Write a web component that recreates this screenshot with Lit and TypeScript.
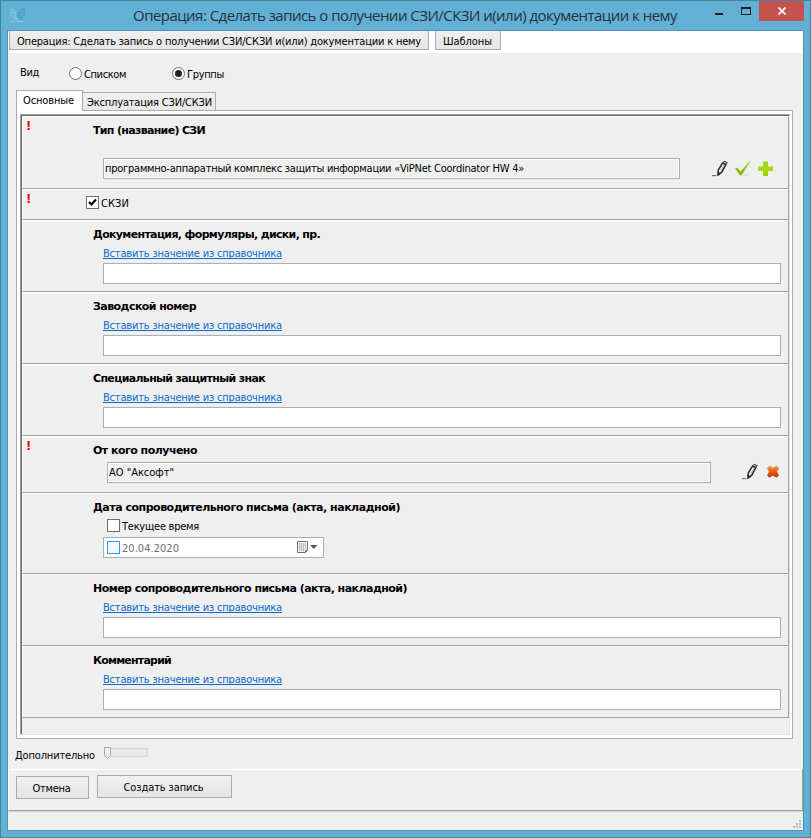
import { LitElement, html, css, svg, nothing, TemplateResult } from "lit";
import { customElement, property } from "lit/decorators.js";

/** A single line of text tracked so that it occupies exactly `w` pixels. */
@customElement("fit-text")
class FitText extends LitElement {
  @property({ type: Number }) w = 0;
  @property() text = "";

  static styles = css`
    :host { display: block; flex: none; line-height: 16px; height: 14px; white-space: nowrap; }
    .t { display: inline-block; white-space: pre; text-decoration: inherit; text-underline-offset: inherit; text-decoration-thickness: 1px; text-decoration-skip-ink: none; }
  `;

  render() {
    return html`<span class="t">${this.text}</span>`;
  }

  updated() {
    const el = this.renderRoot.querySelector(".t") as HTMLElement;
    el.style.letterSpacing = "0px";
    const natural = el.getBoundingClientRect().width;
    el.style.letterSpacing = `${(this.w - natural) / this.text.length}px`;
    this.style.width = `${this.w}px`;
  }
}

const fit = (text: string, w: number, cls = "") =>
  html`<fit-text class=${cls} .text=${text} .w=${w}></fit-text>`;

const pencil = html`<svg class="icon" width="17" height="17" viewBox="0 0 17 17">
  <path d="M0 15.600h4.500" stroke="#777" stroke-width="1.200" />
  <path d="M6.200 10.200 10.600 3l3.200 1.600-4 7.600-3.400 2.600z" fill="#f4f4f4" stroke="#2d2d2d" stroke-width="1.500" />
  <path d="M8.700 11.200 12 5.200" stroke="#999" stroke-width=".8" />
  <path d="M11 2.200 12.200.7 15.800 2.400 14.600 4.300z" fill="#333" />
  <path d="M12 2.200l2.400 1.100" stroke="#eee" stroke-width=".8" />
  <path d="M5.600 11.200 8.800 13.400 5.400 16z" fill="#222" />
</svg>`;

const tick = html`<svg class="icon" width="17" height="17" viewBox="0 0 17 17">
  <defs><linearGradient id="tickFill" x2="0" y2="1"><stop offset="0" stop-color="#a4de2c" /><stop offset="1" stop-color="#78b414" /></linearGradient></defs>
  <path d="M5 16h9l-3-2.500z" fill="#dedede" />
  <path d="M0 8.600 2.400 7.600 5.400 11.400 15 .8 15.600 1.200 7 14.400 5 15.400z" fill="url(#tickFill)" />
</svg>`;

const plus = html`<svg class="icon" width="17" height="17" viewBox="0 0 17 17">
  <defs><linearGradient id="plusFill" x2="0" y2="1"><stop offset="0" stop-color="#a8d420" /><stop offset=".5" stop-color="#a4dc10" /><stop offset="1" stop-color="#94d008" /></linearGradient></defs>
  <path d="M0 15.600h15" stroke="#fff" />
  <path d="M5 1.500h5v5h5v4.500h-5v5H5v-5H0v-4.500h5z" fill="url(#plusFill)" />
</svg>`;

const cross = html`<svg class="icon" width="13" height="13" viewBox="0 0 13 13">
  <defs><linearGradient id="crossFill" gradientUnits="userSpaceOnUse" x1="0" y1="0" x2="0" y2="13"><stop offset="0" stop-color="#f59a35" /><stop offset=".5" stop-color="#e2601c" /><stop offset="1" stop-color="#cf2504" /></linearGradient></defs>
  <path d="M2.500 1.200 6 3.400 9.500 1.200 11.500 3.200 9.500 6.700 11.500 10.200 9.500 12.200 6 10 2.500 12.200.5 10.200 2.500 6.700.5 3.200z" fill="url(#crossFill)" stroke="url(#crossFill)" stroke-linejoin="round" />
</svg>`;

@customElement("app-root")
class AppRoot extends LitElement {
  static styles = css`
    :host { display: block; width: 811px; height: 838px; overflow: hidden; font-family: "DejaVu Sans Condensed", "DejaVu Sans", sans-serif; font-stretch: condensed; font-size: 11px; line-height: 14px; color: #000; }
    * { box-sizing: border-box; }
    svg { display: block; flex: none; }
    .window { width: 811px; height: 838px; background: #62b0d5; border: 1px solid #43879f; padding: 0 6px 6px 6px; display: flex; flex-direction: column; }
    .title { height: 29px; flex: none; display: flex; align-items: flex-start; }
    .logo { margin: 7px 0 0 2px; }
    .caption { font: 15px/20px "Open Sans", "Noto Sans", sans-serif; line-height: 20px; color: #26323a; margin: 4px 0 0 107px; }
    .min { width: 8px; height: 2px; background: #222; margin: 12px 0 0 38px; }
    .max { width: 10px; height: 8px; border: 1px solid #222; border-top-width: 2px; margin: 6px 0 0 18px; }
    .close { width: 45px; height: 20px; background: #c75050; margin-left: 8px; display: grid; place-items: center; }
    .client { flex: 1; min-height: 0; border: 1px solid #5194b2; background: #efefef; display: flex; flex-direction: column; }
    .menu { height: 22px; flex: none; background: #fff; padding-left: 1px; display: flex; gap: 6px; }
    .mbtn { height: 19px; border: 1px solid #acacac; border-top: 0; background: linear-gradient(#efefef, #e6e6e6); padding: 3px 7px 0; }
    .w1 { width: 420px; } .w2 { width: 66px; }
    .mode { height: 37px; flex: none; display: flex; padding-left: 12px; }
    .mode .a { margin-top: 12px; }
    .mode .b { margin: 14px 0 0 2px; }
    .radio { margin-top: 14px; flex: none; width: 13px; height: 13px; border: 1px solid #707070; border-radius: 50%; background: #fff; display: grid; place-items: center; }
    .r1 { margin-left: 30px; } .r2 { margin-left: 46px; }
    .dot { width: 7px; height: 7px; border-radius: 50%; background: #222; }
    .tabs { height: 20px; flex: none; display: flex; align-items: flex-end; padding-left: 8px; }
    .tab { border: 1px solid #acacac; border-bottom: 0; }
    .tab.on { width: 67px; height: 21px; background: #fff; margin-bottom: -1px; padding: 2px 0 0 6px; position: relative; z-index: 1; }
    .tab.off { width: 133px; height: 18px; background: linear-gradient(#f0f0f0, #e8e8e8); border-left: 0; padding: 2px 0 0 4px; }
    .page { width: 777px; height: 629px; flex: none; margin-left: 8px; border: 1px solid #acacac; background: #fff; padding: 3px; }
    .sunk { width: 770px; height: 621px; border: 1px solid; border-color: #a0a0a0 #e3e3e3 #e3e3e3 #a0a0a0; background: #efefef; }
    .sunk2 { height: 619px; border-top: 1px solid #696969; border-left: 1px solid #696969; }
    .row { width: 767px; border: 1px solid; border-color: #fff #a0a0a0 #a0a0a0 #fff; display: flex; padding-top: 6px; }
    .h73 { height: 73px; } .h31 { height: 31px; padding-top: 0; } .h72 { height: 72px; } .h57 { height: 57px; } .h81 { height: 81px; }
    .mark { width: 70px; flex: none; font-weight: bold; font-size: 13px; line-height: 14px; color: #f00; padding-left: 3px; margin-top: -4px; }
    .h31 .mark { width: 63px; margin-top: 2px; }
    .body { flex: 1; display: flex; flex-direction: column; }
    .h31 .body { padding-top: 6px; }
    .head { font-family: "DejaVu Sans", sans-serif; font-stretch: normal; font-weight: bold; font-size: 11px; }
    .link { color: #0a6acb; margin: 5px 0 0 10px; text-decoration: underline; text-underline-offset: 1px; }
    .field { flex: none; border: 1px solid #abadb3; height: 21px; background: #fff; width: 678px; margin: 3px 0 0 10px; }
    .ro { background: #efefef; box-shadow: inset 0 0 0 1px #fff; padding: 2px 0 0 1px; }
    .line { display: flex; align-items: flex-start; }
    .type { width: 577px; margin-top: 21px; }
    .from { width: 604px; margin: 5px 0 0 14px; }
    .icon { overflow: visible; }
    .ics { display: flex; gap: 6px; margin: 23px 0 0 32px; }
    .ics2 { display: flex; gap: 8px; margin: 6px 0 0 31px; align-items: center; }
    .check { width: 13px; height: 13px; flex: none; border: 1px solid #707070; background: #fff; }
    .check.thin { border-color: #3399ff; background: #f3f8ff; }
    .cl { display: flex; gap: 2px; }
    .now { margin: 5px 0 0 14px; gap: 2px; height: 14px; }
    .date { width: 221px; margin-top: 4px; display: flex; padding: 3px 0 0 3px; gap: 2px; color: #6d6d6d; }
    .cal { margin-left: 116px; }
    .extra { height: 30px; flex: none; display: flex; padding: 9px 0 0 7px; }
    .slider { margin: -1px 0 0 9px; }
    .foot { height: 42px; flex: none; border: 1px solid; border-color: #fff #a0a0a0 #a0a0a0 #fff; display: flex; padding: 5px 0 0 7px; gap: 8px; align-items: flex-start; }
    .btn { height: 23px; border: 1px solid #acacac; background: linear-gradient(#f0f0f0, #e5e5e5); display: flex; justify-content: center; padding: 4px 2px 0 0; }
    .cancel { width: 73px; margin-top: 1px; } .create { width: 135px; }
    .status { flex: 1; border-top: 1px solid #d7d7d7; display: flex; justify-content: flex-end; align-items: flex-end; padding: 0 2px 2px 0; }
  `;

  private row(h: string, required: boolean, body: TemplateResult) {
    return html`<div class="row ${h}">
      <div class="mark">${required ? "!" : nothing}</div>
      <div class="body">${body}</div>
    </div>`;
  }

  private textRow(title: string, w: number) {
    return this.row("h72", false, html`
      ${fit(title, w, "head")}
      ${fit("Вставить значение из справочника", 179, "link")}
      <div class="field"></div>`);
  }

  render() {
    const dots = [[6, 0], [3, 3], [6, 3], [0, 6], [3, 6], [6, 6]];
    return html`<div class="window">
      <div class="title">
        <svg class="logo" width="17" height="15" viewBox="0 0 17 15" fill="none">
          <path d="M1 1c5 0 7 4 7.500 11M1 4c4 0 6 3 6 8M1 7c3 0 4 2 4.500 5" stroke="#83c3dc" stroke-width="1.300" />
          <path d="M16 1c-4 0-7 3-8 8M16 4c-3 0-6 2-6.500 7M16 7c-2 0-4 2-4.500 5" stroke="#479fba" stroke-width="1.300" />
          <path d="M1 13.500h15" stroke="#83c3dc" />
        </svg>
        ${fit("Операция: Сделать запись о получении СЗИ/СКЗИ и(или) документации к нему", 544, "caption")}
        <div class="min"></div>
        <div class="max"></div>
        <div class="close"><svg width="8" height="8" viewBox="0 0 8 8"><path d="M.5.5l7 7M7.500.5l-7 7" stroke="#fff" stroke-width="1.700" /></svg></div>
      </div>
      <div class="client">
        <div class="menu">
          <div class="mbtn w1">${fit("Операция: Сделать запись о получении СЗИ/СКЗИ и(или) документации к нему", 404)}</div>
          <div class="mbtn w2">${fit("Шаблоны", 49)}</div>
        </div>
        <div class="mode">
          ${fit("Вид", 19, "a")}
          <div class="radio r1"></div>${fit("Списком", 42, "b")}
          <div class="radio r2"><div class="dot"></div></div>${fit("Группы", 37, "b")}
        </div>
        <div class="tabs">
          <div class="tab on">${fit("Основные", 51)}</div>
          <div class="tab off">${fit("Эксплуатация СЗИ/СКЗИ", 125)}</div>
        </div>
        <div class="page"><div class="sunk"><div class="sunk2">
          ${this.row("h73", true, html`
            ${fit("Тип (название) СЗИ", 112, "head")}
            <div class="line">
              <div class="field ro type">${fit("программно-аппаратный комплекс защиты информации «ViPNet Coordinator HW 4»", 419)}</div>
              <div class="ics">${pencil}${tick}${plus}</div>
            </div>`)}
          ${this.row("h31", true, html`
            <div class="cl"><div class="check"><svg width="11" height="11" viewBox="0 0 11 11"><path d="M2 5 4.500 7.500 9 2.500" fill="none" stroke="#000" stroke-width="2.200" /></svg></div>${fit("СКЗИ", 28)}</div>`)}
          ${this.textRow("Документация, формуляры, диски, пр.", 227)}
          ${this.textRow("Заводской номер", 103)}
          ${this.textRow("Специальный защитный знак", 172)}
          ${this.row("h57", true, html`
            ${fit("От кого получено", 104, "head")}
            <div class="line">
              <div class="field ro from">${fit('АО "Аксофт"', 65)}</div>
              <div class="ics2">${pencil}${cross}</div>
            </div>`)}
          ${this.row("h81", false, html`
            ${fit("Дата сопроводительного письма (акта, накладной)", 307, "head")}
            <div class="cl now"><div class="check"></div>${fit("Текущее время", 77)}</div>
            <div class="field date"><div class="check thin"></div>${fit("20.04.2020", 57)}
              <svg class="cal" width="21" height="13" viewBox="0 0 21 13">
                <path d="M.5.5h10v8.500l-2 2.500h-8z" fill="#f8f4f2" stroke="#75706e" />
                <path d="M10.500 9h-2.500v3z" fill="#6b6462" />
                ${[3, 5, 7, 9].map((y) => svg`<path d=${`M2 ${y}h${y > 8 ? 5 : 7}`} stroke="#a3a9bb" stroke-width="1.300" stroke-dasharray="1.300 .7" />`)}
                <path d="M13 4h7.500l-3.750 4z" fill="#44587e" />
              </svg>
            </div>`)}
          ${this.textRow("Номер сопроводительного письма (акта, накладной)", 314)}
          ${this.textRow("Комментарий", 78)}
        </div></div></div>
        <div class="extra">
          ${fit("Дополнительно", 80)}
          <svg class="slider" width="45" height="13" viewBox="0 0 45 13">
            <rect x=".5" y="1.500" width="43" height="8" fill="#e7eaea" stroke="#d6d6d6" />
            <path d="M.5.5h6v8l-3 3-3-3z" fill="#f0f0f0" stroke="#acacac" />
          </svg>
        </div>
        <div class="foot">
          <div class="btn cancel">${fit("Отмена", 38)}</div>
          <div class="btn create">${fit("Создать запись", 80)}</div>
        </div>
        <div class="status"><svg width="8" height="8" viewBox="0 0 8 8">${dots.map(([x, y]) => svg`<rect x=${x} y=${y} width="2" height="2" fill="#bfbfbf" />`)}</svg></div>
      </div>
    </div>`;
  }
}
